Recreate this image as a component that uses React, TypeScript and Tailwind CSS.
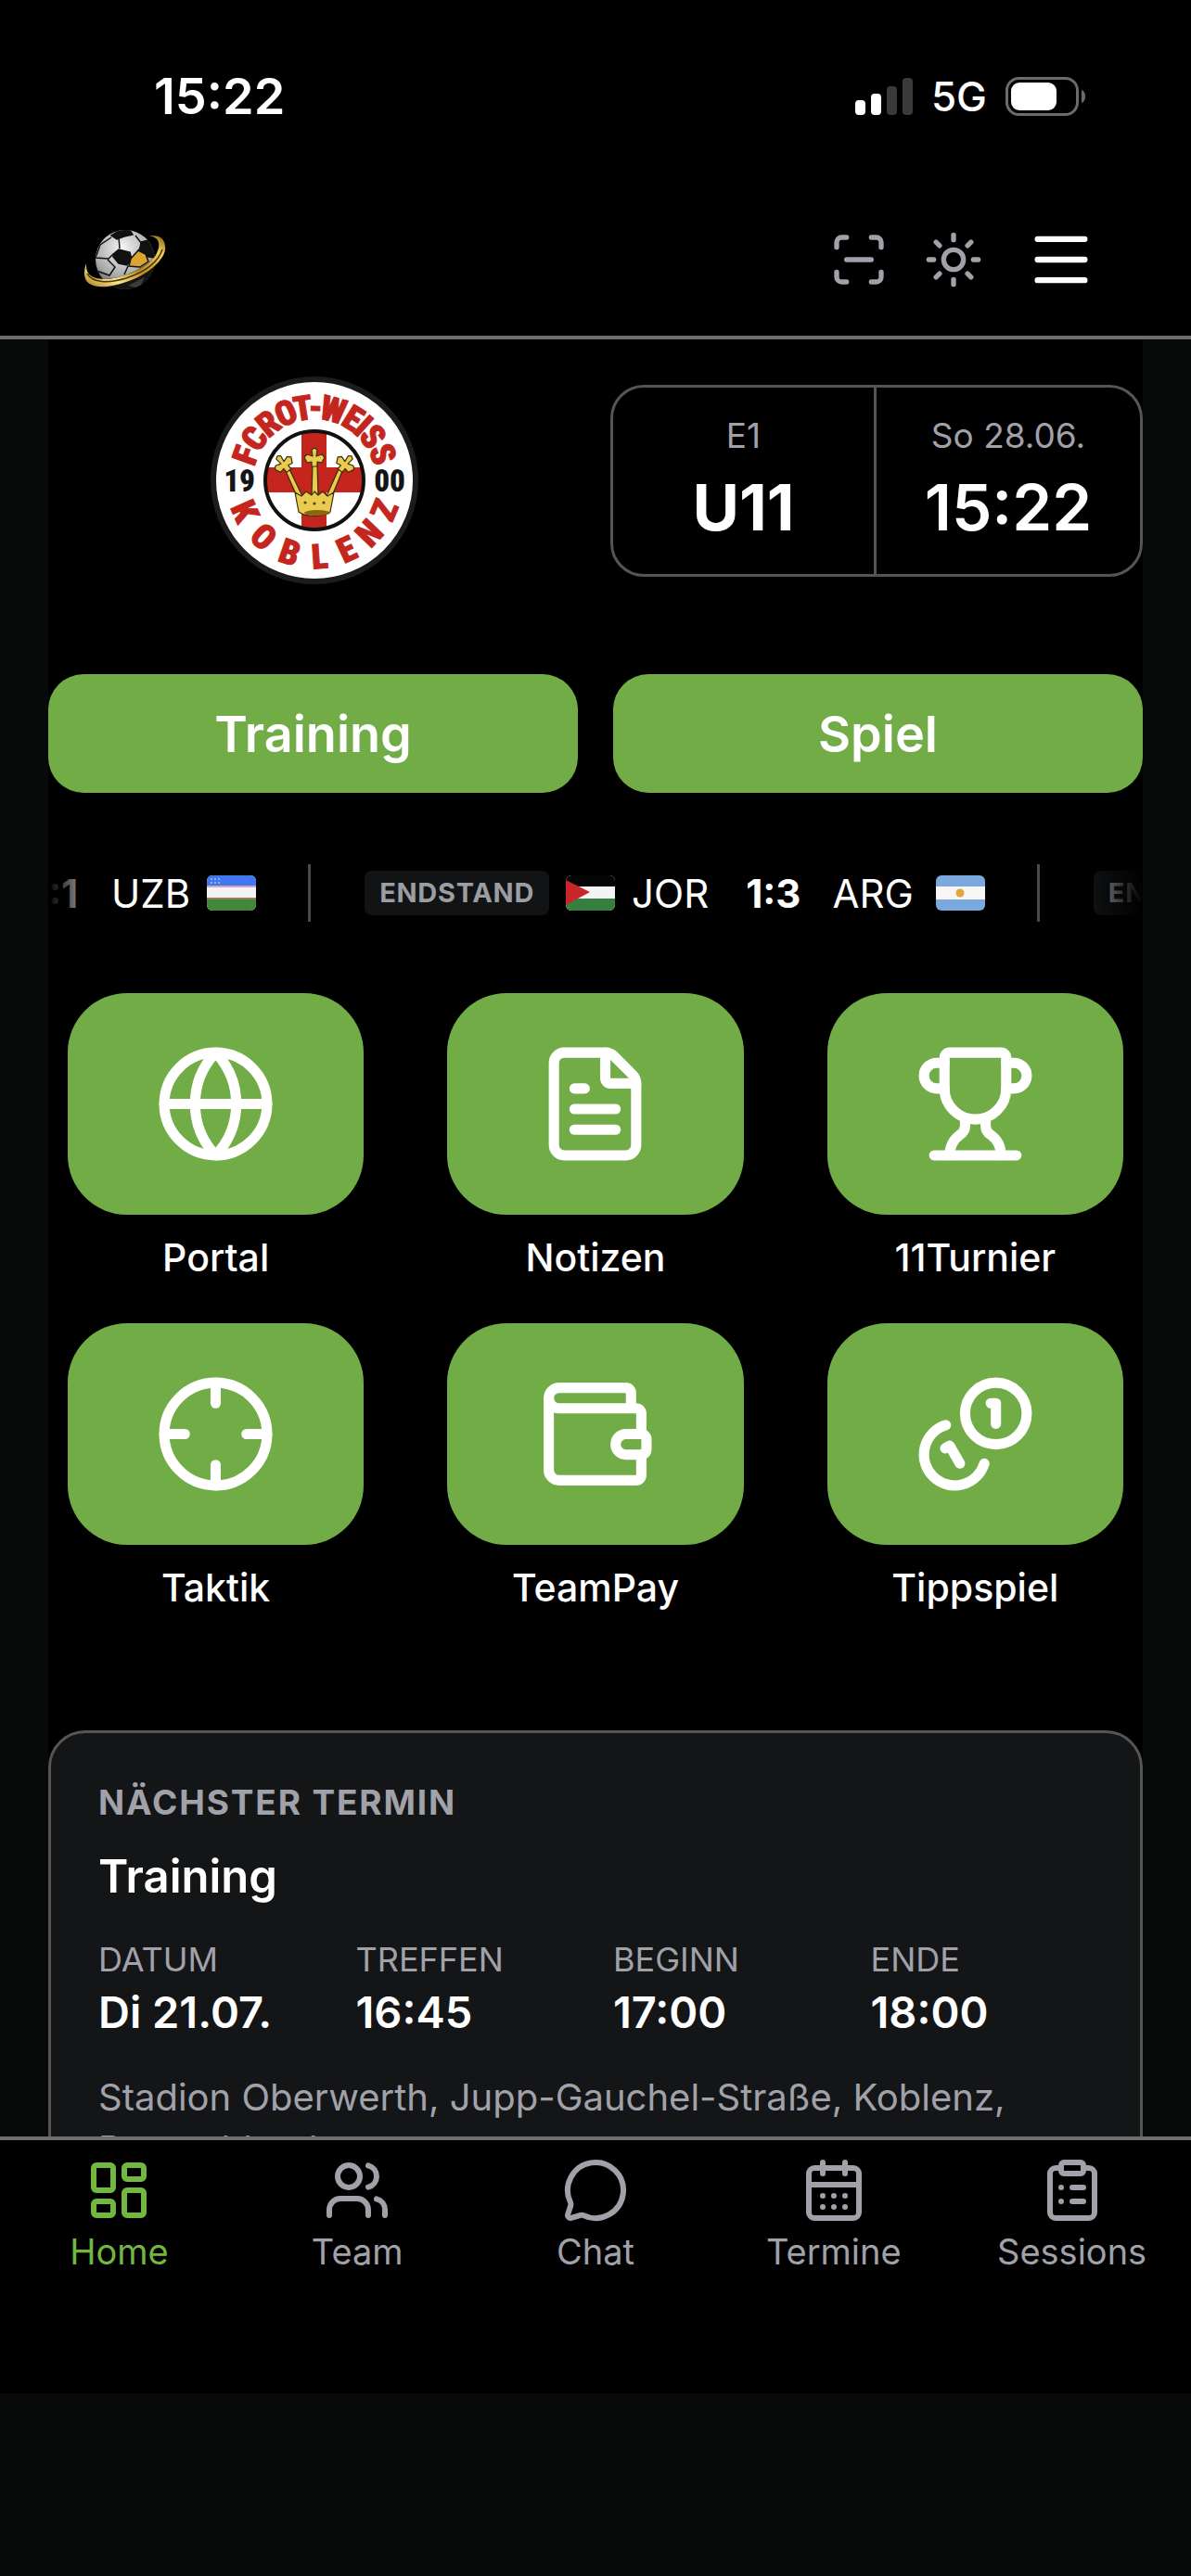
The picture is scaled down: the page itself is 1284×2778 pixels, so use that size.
import { useState } from 'react';
import {
  CalendarDays,
  ClipboardList,
  Crosshair,
  FileText,
  Globe,
  LayoutDashboard,
  Menu,
  MessageCircle,
  ScanLine,
  Sun,
  Trophy,
  Users,
  Wallet,
} from 'lucide-react';

function CoinsIcon({ size = 24 }: { size?: number }) {
  return (
    <svg
      width={size}
      height={size}
      viewBox="0 0 24 24"
      fill="none"
      stroke="currentColor"
      strokeWidth="2"
      strokeLinecap="round"
      strokeLinejoin="round"
      aria-hidden="true"
    >
      <circle cx="16" cy="8" r="6" />
      <path d="M13.744 17.736a6 6 0 1 1-7.48-7.48" />
      <path d="M15 6h1v4" />
      <path d="m6.134 14.768.866-.5 2 3.464" />
    </svg>
  );
}

const tiles = [
  { label: 'Portal', icon: Globe },
  { label: 'Notizen', icon: FileText },
  { label: '11Turnier', icon: Trophy },
  { label: 'Taktik', icon: Crosshair },
  { label: 'TeamPay', icon: Wallet },
  { label: 'Tippspiel', icon: CoinsIcon },
];

const tabs = [
  { label: 'Home', icon: LayoutDashboard },
  { label: 'Team', icon: Users },
  { label: 'Chat', icon: MessageCircle },
  { label: 'Termine', icon: CalendarDays },
  { label: 'Sessions', icon: ClipboardList },
];

const termin = [
  { label: 'DATUM', value: 'Di 21.07.' },
  { label: 'TREFFEN', value: '16:45' },
  { label: 'BEGINN', value: '17:00' },
  { label: 'ENDE', value: '18:00' },
];

// letter + angle in degrees, measured from the vertical axis of the crest
const crestTop: [string, number][] = [
  ['F', -70], ['C', -55], ['R', -39], ['O', -23], ['T', -9], ['-', 1],
  ['W', 15], ['E', 32], ['I', 42], ['S', 53], ['S', 69],
];
const crestBottom: [string, number][] = [
  ['K', 66], ['O', 42], ['B', 19], ['L', -4], ['E', -25], ['N', -46], ['Z', -67],
];

function StatusBar() {
  return (
    <div className="flex h-52 items-center justify-between pl-[166px] pr-[114px]">
      <span className="text-[54px] font-semibold leading-none">15:22</span>
      <div className="flex items-center gap-5">
        <svg width="62" height="40" viewBox="0 0 62 40" aria-hidden="true">
          <rect x="0" y="24" width="11" height="16" rx="4" fill="#fff" />
          <rect x="17" y="17" width="11" height="23" rx="4" fill="#fff" />
          <rect x="34" y="9" width="11" height="31" rx="4" fill="#3a3a3a" />
          <rect x="51" y="0" width="11" height="40" rx="4" fill="#3a3a3a" />
        </svg>
        <span className="text-[44px] font-medium leading-none">5G</span>
        <svg width="86" height="42" viewBox="0 0 86 42" aria-hidden="true">
          <rect x="1.5" y="1.5" width="76" height="39" rx="13" fill="none" stroke="#6b6b6b" strokeWidth="3" />
          <rect x="6" y="6" width="49" height="30" rx="9" fill="#fff" />
          <path d="M82 14v14c3-1 4-4 4-7s-1-6-4-7z" fill="#6b6b6b" />
        </svg>
      </div>
    </div>
  );
}

function BallLogo() {
  return (
    <svg width="96" height="76" viewBox="0 0 96 76" aria-hidden="true">
      <defs>
        <linearGradient id="gold" x1="0" y1="1" x2="1" y2="0">
          <stop offset="0" stopColor="#a87a18" />
          <stop offset="0.25" stopColor="#fbe68a" />
          <stop offset="0.5" stopColor="#b98a20" />
          <stop offset="0.8" stopColor="#f2cf58" />
          <stop offset="1" stopColor="#7a5a10" />
        </linearGradient>
        <radialGradient id="ball" cx="0.45" cy="0.3" r="0.75">
          <stop offset="0" stopColor="#f6f6f6" />
          <stop offset="0.65" stopColor="#a8a8a8" />
          <stop offset="1" stopColor="#3a3a3a" />
        </radialGradient>
        <clipPath id="ballClip">
          <circle cx="49" cy="38" r="32" />
        </clipPath>
      </defs>
      <circle cx="49" cy="38" r="32" fill="url(#ball)" />
      <g clipPath="url(#ballClip)" stroke="#111" strokeWidth="1.5" fill="none">
        <path d="M36 32l6-5 12 3 2 8-5 6-9-2-6-7z" fill="#111" />
        <path d="M34 12l8-5 12-1 3 5-9 2-8 3z" fill="#111" />
        <path d="M66 19l8-2 9 10-3 9-11-2-4-7z" fill="#111" />
        <path d="M55 37l8-9 8 4 3 8-9 6-12-1z" fill="#d9a52f" />
        <path d="M34 14l-12 8-5 14 14 1 5-5M42 14l1 12M60 12l7 9-4 8M30 38l8 8-6 9-14-5M52 45l-4 9" />
        <path d="M10 59c26 2 50-4 72-24v41H10z" fill="#141414" stroke="none" />
        <path d="M52 66l18-9-6 12z" fill="#3c3c3c" stroke="none" />
      </g>
      <path
        d="M7 42C1 60 8 69 30 67C60 63 88 45 92 28C93 17 88 11 75 12C86 14 88 22 82 33C74 46 52 56 32 59C14 60 6 55 7 42z"
        fill="url(#gold)"
      />
      <path d="M8 53c6 10 22 11 42 5C68 52 84 42 89 27" fill="none" stroke="#4a3508" strokeWidth="1.5" />
    </svg>
  );
}

const crownCross = 'M-3-11L0-13 3-11 2-4 8-6 11-3 8 3 3 2V7H-3V2L-8 3-11-3-8-6-2-4z';

function ClubCrest() {
  return (
    <svg
      width="224"
      height="224"
      viewBox="-112 -112 224 224"
      role="img"
      aria-label="FC Rot-Weiss Koblenz 1900"
      fontFamily='"Roboto Condensed", Roboto, sans-serif'
      fontWeight="900"
      fontSize="37"
      textAnchor="middle"
    >
      <defs>
        <clipPath id="crestInner">
          <circle r="53" />
        </clipPath>
      </defs>
      <circle r="109" fill="#fff" stroke="#1c1c1c" strokeWidth="6" />
      <g fill="#c4261d" stroke="#c4261d" strokeWidth="1">
        {crestTop.map(([letter, angle]) => (
          <text key={`${letter}${angle}`} y="-66" transform={`rotate(${angle})`}>
            {letter}
          </text>
        ))}
        {crestBottom.map(([letter, angle]) => (
          <text key={`${letter}${angle}`} y="95" transform={`rotate(${angle})`}>
            {letter}
          </text>
        ))}
      </g>
      <g clipPath="url(#crestInner)" fill="#c4261d">
        <rect x="-14" y="-54" width="27" height="108" />
        <rect x="-54" y="-14" width="108" height="27" />
      </g>
      <circle r="53" fill="none" stroke="#111" strokeWidth="4" />
      <g fill="#151515" fontSize="33">
        <text x="-81" y="12">19</text>
        <text x="81" y="12">00</text>
      </g>
      <g fill="#e9cb50" stroke="#3a2c08" strokeWidth="1.2" strokeLinejoin="round">
        <path d="M-31-10l4-2L-13 17h-6z" />
        <path d="M30-10l-4-2L13 17h6z" />
        <path d="M-2-18h5l1 34h-7z" />
        <path d={crownCross} transform="translate(0 -22)" />
        <path d={crownCross} transform="translate(-32 -16) rotate(-38)" />
        <path d={crownCross} transform="translate(32 -16) rotate(38)" />
        <path d="M-21 13l7 4 5-5 6 4 3-4 4 4 5-4 5 5 7-4-4 21c-8 6-26 6-34 0z" />
      </g>
      <ellipse cx="3" cy="35" rx="14" ry="3" fill="#8a6512" />
      <g fill="#5c4308">
        <circle cx="-10" cy="24" r="1.6" />
        <circle cx="0" cy="25" r="1.6" />
        <circle cx="10" cy="24" r="1.6" />
      </g>
    </svg>
  );
}

function FlagUzb() {
  return (
    <svg width="53" height="38" viewBox="0 0 53 38" className="rounded-md" aria-label="Usbekistan">
      <rect width="53" height="38" fill="#f4f4f4" />
      <rect width="53" height="12" fill="#3f78ee" />
      <rect y="11" width="53" height="2" fill="#d9a0c0" />
      <rect y="25" width="53" height="13" fill="#43873a" />
      <rect y="24" width="53" height="2" fill="#97805a" />
      <path d="M4 4h10M4 8h10" stroke="#8fb0f5" strokeWidth="2" strokeDasharray="2 2" />
    </svg>
  );
}

function FlagJor() {
  return (
    <svg width="53" height="38" viewBox="0 0 53 38" className="rounded-md" aria-label="Jordanien">
      <rect width="53" height="38" fill="#f4f4f4" />
      <rect width="53" height="12" fill="#050505" />
      <rect y="25" width="53" height="13" fill="#35803f" />
      <path d="M0 5l26 13L0 32z" fill="#c9252d" />
    </svg>
  );
}

function FlagArg() {
  return (
    <svg width="53" height="38" viewBox="0 0 53 38" className="rounded-md" aria-label="Argentinien">
      <rect width="53" height="38" fill="#7ba8dd" />
      <rect y="12" width="53" height="14" fill="#f6f6f6" />
      <circle cx="26" cy="19" r="4.5" fill="#e0a63c" />
    </svg>
  );
}

function StatusBadge() {
  return (
    <span className="rounded-lg bg-[#121315] px-4 text-[29px] font-bold leading-[48px] tracking-wide text-[#9c9ca3]">
      ENDSTAND
    </span>
  );
}

function Ticker() {
  return (
    <div className="relative mt-[77px] h-[62px] overflow-hidden">
      <div className="flex h-full w-max items-center whitespace-nowrap text-[42px]">
        <span className="w-8 font-bold">:1</span>
        <span className="ml-9">UZB</span>
        <span className="ml-[18px]"><FlagUzb /></span>
        <span className="ml-14 mr-[58px] h-full w-[3px] bg-[#4a4a4a]" />
        <StatusBadge />
        <span className="ml-[18px]"><FlagJor /></span>
        <span className="ml-[18px]">JOR</span>
        <span className="ml-10 font-bold">1:3</span>
        <span className="ml-[34px]">ARG</span>
        <span className="ml-6"><FlagArg /></span>
        <span className="ml-14 mr-[58px] h-full w-[3px] bg-[#4a4a4a]" />
        <StatusBadge />
      </div>
      <div className="pointer-events-none absolute inset-y-0 left-0 w-16 bg-linear-to-r from-black to-transparent" />
      <div className="pointer-events-none absolute inset-y-0 right-0 w-16 bg-linear-to-l from-black to-transparent" />
    </div>
  );
}

function App() {
  const [activeTab, setActiveTab] = useState('Home');

  return (
    <div className="flex h-screen flex-col bg-[#070a09] pb-[197px] font-['Inter',sans-serif] text-white">
      <header className="shrink-0 border-b-4 border-[#6e6e6e] bg-black pb-[10px]">
        <StatusBar />
        <div className="flex h-36 items-center justify-between pl-[86px] pr-[102px]">
          <a href="#home" aria-label="Startseite">
            <BallLogo />
          </a>
          <div className="flex items-center gap-[38px] text-[#a1a1aa]">
            <button type="button" aria-label="Scannen">
              <ScanLine size={64} />
            </button>
            <button type="button" aria-label="Helles Design">
              <Sun size={64} />
            </button>
            <button type="button" aria-label="Menü" className="ml-2 text-white">
              <Menu size={76} />
            </button>
          </div>
        </div>
      </header>

      <main className="min-h-0 flex-1 overflow-hidden px-[52px]">
        <div className="bg-black pt-10">
          <div className="grid grid-cols-2 items-center gap-8">
            <div className="flex justify-center">
              <ClubCrest />
            </div>
            <div className="grid h-[207px] grid-cols-2 divide-x-[3px] divide-[#555] rounded-[36px] border-[3px] border-[#555] text-center">
              <div className="pt-[26px]">
                <div className="text-[37px] leading-[52px] text-[#a1a1aa]">E1</div>
                <div className="text-[69px] font-bold leading-[102px]">U11</div>
              </div>
              <div className="pt-[26px]">
                <div className="text-[37px] leading-[52px] text-[#a1a1aa]">So 28.06.</div>
                <div className="text-[69px] font-semibold leading-[102px]">15:22</div>
              </div>
            </div>
          </div>

          <div className="mt-[97px] grid grid-cols-2 gap-[38px] text-[54px] font-semibold">
            <button type="button" className="h-32 rounded-[38px] bg-[#71ac46]">
              Training
            </button>
            <button type="button" className="h-32 rounded-[38px] bg-[#71ac46]">
              Spiel
            </button>
          </div>

          <Ticker />

          <div className="mt-[77px] grid grid-cols-3 gap-x-12 gap-y-[41px]">
            {tiles.map(({ label, icon: Icon }) => (
              <button key={label} type="button" className="px-[21px]">
                <span className="flex h-[239px] items-center justify-center rounded-[64px] bg-[#71ac46]">
                  <Icon size={133} />
                </span>
                <span className="mt-4 block text-[41px] font-medium leading-[60px]">{label}</span>
              </button>
            ))}
          </div>

          <section className="mt-[124px] rounded-[40px] border-[3px] border-[#555] bg-[#141517] p-[51px]">
            <h2 className="text-[37px] font-bold leading-[48px] tracking-wider text-[#a1a1aa]">NÄCHSTER TERMIN</h2>
            <h3 className="mt-[26px] text-[49px] font-semibold leading-[60px]">Training</h3>
            <dl className="mt-[35px] grid grid-cols-4 gap-[38px]">
              {termin.map(({ label, value }) => (
                <div key={label} className="whitespace-nowrap">
                  <dt className="text-[36px] leading-[48px] text-[#a1a1aa]">{label}</dt>
                  <dd className="mt-[3px] text-[47px] font-semibold leading-[60px]">{value}</dd>
                </div>
              ))}
            </dl>
            <p className="mt-[34px] text-[40px] leading-[56px] text-[#a1a1aa]">
              Stadion Oberwerth, Jupp-Gauchel-Straße, Koblenz, Deutschland
            </p>
          </section>
        </div>
      </main>

      <nav className="grid h-[277px] shrink-0 grid-cols-5 border-t-4 border-[#6e6e6e] bg-black">
        {tabs.map(({ label, icon: Icon }) => (
          <button
            key={label}
            type="button"
            onClick={() => setActiveTab(label)}
            className={`flex flex-col items-center pt-[18px] ${activeTab === label ? 'text-[#71b740]' : 'text-[#a1a1aa]'}`}
          >
            <Icon size={72} />
            <span className="mt-1 text-[38px] leading-[52px]">{label}</span>
          </button>
        ))}
      </nav>
    </div>
  );
}

export default App;
